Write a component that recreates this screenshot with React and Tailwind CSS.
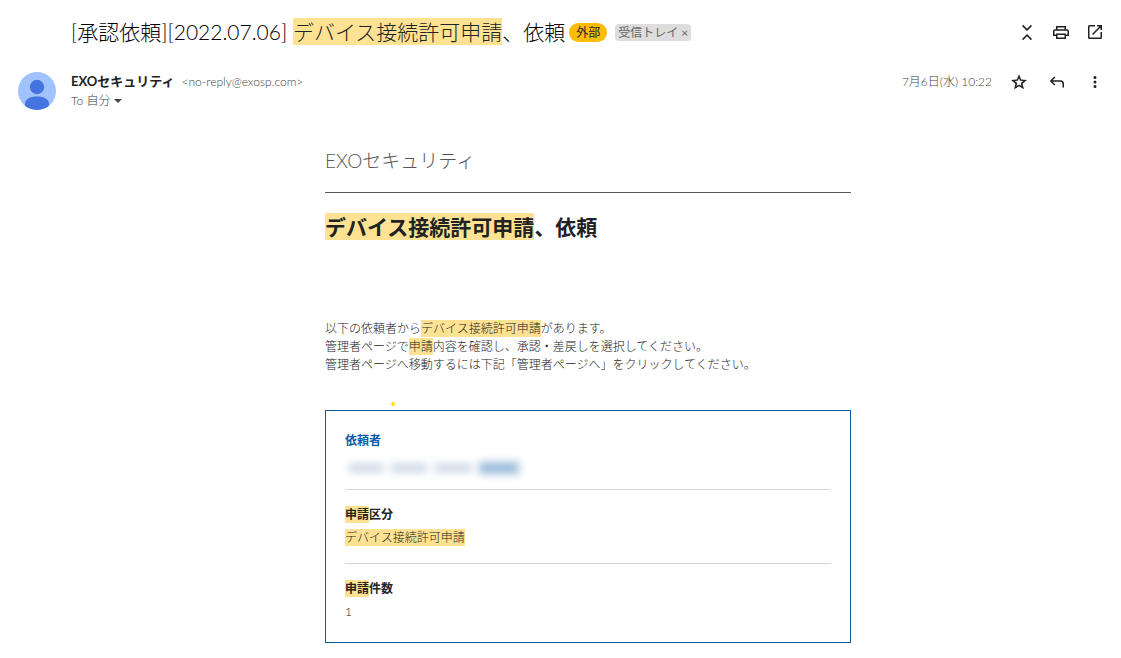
import React from "react";

const Icon = ({ d }) => (
  <svg
    viewBox="0 0 20 20"
    className="size-5"
    fill="currentColor"
    aria-hidden="true"
  >
    <path fillRule="evenodd" d={d} />
  </svg>
);

const icons = {
  collapse:
    "M5 3.900 6.100 2.800 10 6.700l3.900-3.900L15 3.900l-5 5ZM5 17.100l1.100 1.100 3.900-3.900 3.900 3.900 1.100-1.100-5-5Z",
  print:
    "M5 4h10v3.200h1A2 2 0 0 1 18 9.200v4.800h-3v3H5v-3H2V9.200a2 2 0 0 1 2-2h1ZM6.500 5.500v1.700h7V5.500ZM3.500 12.500H5v-1h10v1h1.500V9.200a.5.5 0 0 0-.5-.5H4a.5.5 0 0 0-.5.5ZM6.500 13v2.500h7V13Z",
  open: "M4.5 3H10v1.500H4.500v11h11V10H17v5.500A1.500 1.500 0 0 1 15.500 17h-11A1.500 1.500 0 0 1 3 15.500v-11A1.500 1.500 0 0 1 4.500 3ZM12 3h5v5h-1.500V5.560l-7.440 7.440L7 11.940l7.440-7.440H12Z",
  star: "m10 2.300 2.200 5.200 5.700.5-4.300 3.700 1.300 5.500L10 14.300l-4.900 2.900 1.300-5.500L2.100 8l5.700-.5ZM10 6 8.900 8.800l-3.100.3 2.400 2-.7 3 2.500-1.600 2.500 1.600-.7-3 2.400-2-3.100-.3Z",
  reply:
    "M7.300 4.500 8.400 5.600 5.600 8.300h7.900A3.500 3.500 0 0 1 17 11.800V15.500h-1.500v-3.700a2 2 0 0 0-2-2H5.600l2.800 2.800-1.100 1L2.800 9Z",
  more: "M10 4a1.500 1.500 0 1 1 0 3 1.500 1.500 0 0 1 0-3ZM10 8.500a1.500 1.500 0 1 1 0 3 1.500 1.500 0 0 1 0-3ZM10 13a1.500 1.500 0 1 1 0 3 1.500 1.500 0 0 1 0-3Z",
};

const Mark = ({ children }) => (
  <mark className="bg-[#fde293] py-px text-[#222]">{children}</mark>
);

const IconButton = ({ label, icon }) => (
  <button type="button" aria-label={label} className="block text-[#202124]">
    <Icon d={icons[icon]} />
  </button>
);

const Avatar = () => (
  <svg viewBox="0 0 38 38" className="size-[38px] shrink-0" aria-hidden="true">
    <clipPath id="avatar">
      <circle cx="19" cy="19" r="19" />
    </clipPath>
    <g clipPath="url(#avatar)">
      <rect width="38" height="38" fill="#a0c3ff" />
      <circle cx="19" cy="15" r="7.200" fill="#4374e0" />
      <path
        d="M7 38v-6c0-5 5-7.500 12-7.500S31 27 31 32v6Z"
        fill="#4374e0"
      />
    </g>
  </svg>
);

const Field = ({ title, children }) => (
  <div className="border-b border-[#d5d5d5] py-[15px] first:pt-0 last:border-b-0 last:pb-0">
    <dt className="font-bold leading-5">{title}</dt>
    <dd className="mt-[3px] leading-5">{children}</dd>
  </div>
);

const App = () => {
  return (
    <main className="bg-white pb-4 pl-[18px] pr-4 pt-4 font-['Lato','Noto_Sans_CJK_JP',sans-serif] text-[#202124]">
      <header className="flex items-center justify-between pl-[53px]">
        <div className="flex items-center">
          <h1 className="text-[21px] font-light leading-8 text-black">
            [承認依頼][2022.07.06] <Mark>デバイス接続許可申請</Mark>、依頼
          </h1>
          <span className="ml-1 rounded-full bg-[#fbbc04] px-[7px] text-xs leading-[19px]">
            外部
          </span>
          <span className="ml-2 flex items-center gap-[3px] rounded bg-[#ddd] px-[3px] text-xs leading-[17px] text-[#666]">
            受信トレイ
            <button type="button" aria-label="受信トレイを削除">
              ×
            </button>
          </span>
        </div>
        <div className="flex gap-[14px]">
          <IconButton label="すべて折りたたむ" icon="collapse" />
          <IconButton label="すべて印刷" icon="print" />
          <IconButton label="新しいウィンドウで開く" icon="open" />
        </div>
      </header>

      <section className="mt-6 flex">
        <Avatar />
        <div className="ml-[15px] grow">
          <p className="flex items-center gap-[7px] leading-[19px]">
            <span className="text-[13px] font-bold">EXOセキュリティ</span>
            <span className="text-xs font-light text-[#3c4043]">
              &lt;no-reply@exosp.com&gt;
            </span>
          </p>
          <button
            type="button"
            className="flex items-center gap-1 text-xs font-light leading-5 text-[#3c4043]"
          >
            To 自分
            <svg viewBox="0 0 8 4" className="h-1 w-2" aria-hidden="true">
              <path d="M0 0h8L4 4Z" fill="#444" />
            </svg>
          </button>
        </div>
        <div className="flex h-5 items-center">
          <time
            dateTime="2022-07-06T10:22"
            className="mr-[17px] text-xs font-light text-[#3c4043]"
          >
            7月6日(水) 10:22
          </time>
          <div className="flex gap-[18px]">
            <IconButton label="スター" icon="star" />
            <IconButton label="返信" icon="reply" />
            <IconButton label="その他" icon="more" />
          </div>
        </div>
      </section>

      <div className="pl-[53px]">
        <article className="mx-auto mt-9 max-w-[526px] text-xs font-light text-[#222]">
          <p className="border-b border-[#555] pb-[17px] text-[19px] leading-7 text-[#555]">
            EXOセキュリティ
          </p>
          <h2 className="mt-[18px] text-[21px] font-bold leading-8 text-[#222]">
            <Mark>デバイス接続許可申請</Mark>、依頼
          </h2>
          <p className="mt-[77px] leading-[18px]">
            以下の依頼者から<Mark>デバイス接続許可申請</Mark>があります。
            <br />
            管理者ページで<Mark>申請</Mark>
            内容を確認し、承認・差戻しを選択してください。
            <br />
            管理者ページへ移動するには下記「管理者ページへ」をクリックしてください。
          </p>
          <div className="ml-[66px] mt-7 size-1 rounded-full bg-[#ffe000]" />
          <dl className="mt-1 border border-[#0b5ea8] px-[19px] py-5">
            <Field title={<span className="text-[#0b5cad]">依頼者</span>}>
              <div className="flex h-5 items-center pt-2" aria-hidden="true">
                <span className="ml-1 h-2 w-[34px] bg-[#8ba6c2] opacity-50 blur-xs" />
                <span className="ml-2 h-2 w-9 bg-[#8ba6c2] opacity-50 blur-xs" />
                <span className="ml-2 h-2 w-9 bg-[#8ba6c2] opacity-50 blur-xs" />
                <span className="ml-2 h-3 w-10 bg-[#6f9fca] opacity-70 blur-xs" />
              </div>
            </Field>
            <Field
              title={
                <>
                  <Mark>申請</Mark>区分
                </>
              }
            >
              <Mark>デバイス接続許可申請</Mark>
            </Field>
            <Field
              title={
                <>
                  <Mark>申請</Mark>件数
                </>
              }
            >
              1
            </Field>
          </dl>
        </article>
      </div>
    </main>
  );
};

export default App;
